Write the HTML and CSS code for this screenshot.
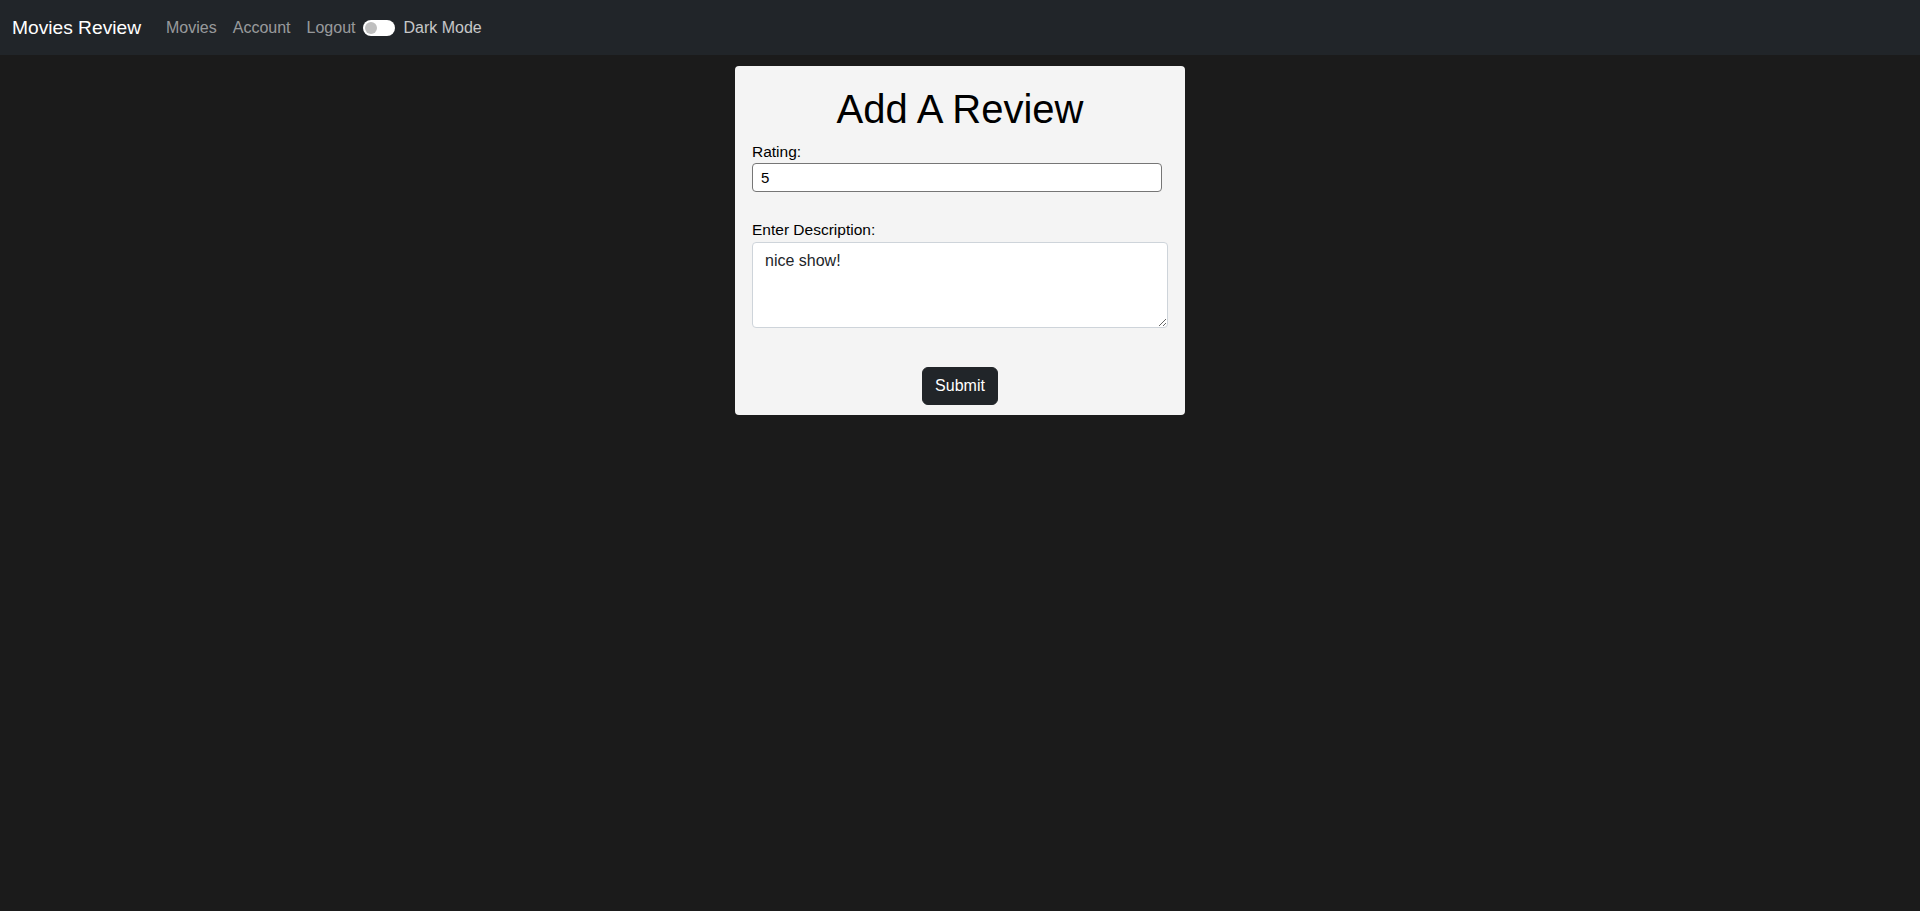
FILE: index.html
```html
<!DOCTYPE html>
<html lang="en">
<head>
<meta charset="utf-8">
<title>Movies Review</title>
<link rel="stylesheet" href="styles.css">
</head>
<body>
<nav class="navbar">
  <a class="brand" href="#">Movies Review</a>
  <ul class="nav-links">
    <li><a href="#">Movies</a></li>
    <li><a href="#">Account</a></li>
    <li><a href="#">Logout</a></li>
  </ul>
  <label class="switch">
    <span class="switch-track"><span class="switch-knob"></span></span>
    <span class="switch-label">Dark Mode</span>
  </label>
</nav>
<main class="page">
  <form class="card">
    <h1 class="title">Add A Review</h1>
    <label class="field-label" for="rating">Rating:</label>
    <input class="rating-input" id="rating" type="text" value="5">
    <label class="field-label desc-label" for="desc">Enter Description:</label>
    <textarea class="desc-input" id="desc" rows="3">nice show!</textarea>
    <div class="actions">
      <button class="btn-submit" type="button">Submit</button>
    </div>
  </form>
</main>
</body>
</html>
```
FILE: styles.css
```css
* { box-sizing: border-box; }
html, body { margin: 0; padding: 0; }
body {
  background: #1b1b1b;
  font-family: "Liberation Sans", Arial, sans-serif;
  font-size: 16px;
  line-height: 24px;
  color: #212529;
  min-height: 911px;
}
.navbar {
  height: 55px;
  background: #212529;
  display: flex;
  align-items: center;
  padding: 0 12px;
}
.brand {
  color: #fff;
  text-decoration: none;
  font-size: 19.2px;
  line-height: 30px;
  margin-right: 17px;
}
.nav-links {
  list-style: none;
  display: flex;
  margin: 0;
  padding: 0;
}
.nav-links a {
  display: block;
  padding: 8px 8px;
  color: rgba(255,255,255,0.55);
  text-decoration: none;
  font-size: 16px;
}
.switch {
  display: flex;
  align-items: center;
  gap: 8px;
}
.switch-track {
  width: 32px;
  height: 16px;
  background: #fff;
  border-radius: 8px;
  display: flex;
  align-items: center;
  padding: 0 2px;
}
.switch-knob {
  width: 12px;
  height: 12px;
  border-radius: 50%;
  background: #bfbfbf;
}
.switch-label {
  color: rgba(255,255,255,0.75);
  font-size: 16px;
}
.page {
  display: flex;
  justify-content: center;
  padding-top: 11px;
}
.card {
  width: 450px;
  background: #f4f4f4;
  border-radius: 4px;
  padding: 19px 17px 10px 17px;
  display: flex;
  flex-direction: column;
}
.title {
  margin: 0 0 8px 0;
  text-align: center;
  font-size: 40px;
  line-height: 48px;
  font-weight: 500;
  color: #000;
}
.field-label {
  display: block;
  color: #000;
  font-size: 15.5px;
  line-height: 22px;
}
.rating-input {
  width: 410px;
  height: 29px;
  border: 1px solid #767676;
  border-radius: 4px;
  background: #fff;
  padding: 1px 8px;
  font: inherit;
  font-size: 15px;
  color: #000;
}
.desc-label { margin-top: 27px; margin-bottom: 1px; }
.desc-input {
  width: 100%;
  height: 86px;
  border: 1px solid #ced4da;
  border-radius: 4px;
  background: #fff;
  padding: 6px 12px;
  font: inherit;
  font-size: 16px;
  color: #212529;
  resize: vertical;
}
.actions {
  display: flex;
  justify-content: center;
  margin-top: 39px;
}
.btn-submit {
  width: 76px;
  height: 38px;
  background: #212529;
  border: 1px solid #212529;
  border-radius: 6px;
  color: #fff;
  font: inherit;
  font-size: 16px;
  padding: 0;
}
```
